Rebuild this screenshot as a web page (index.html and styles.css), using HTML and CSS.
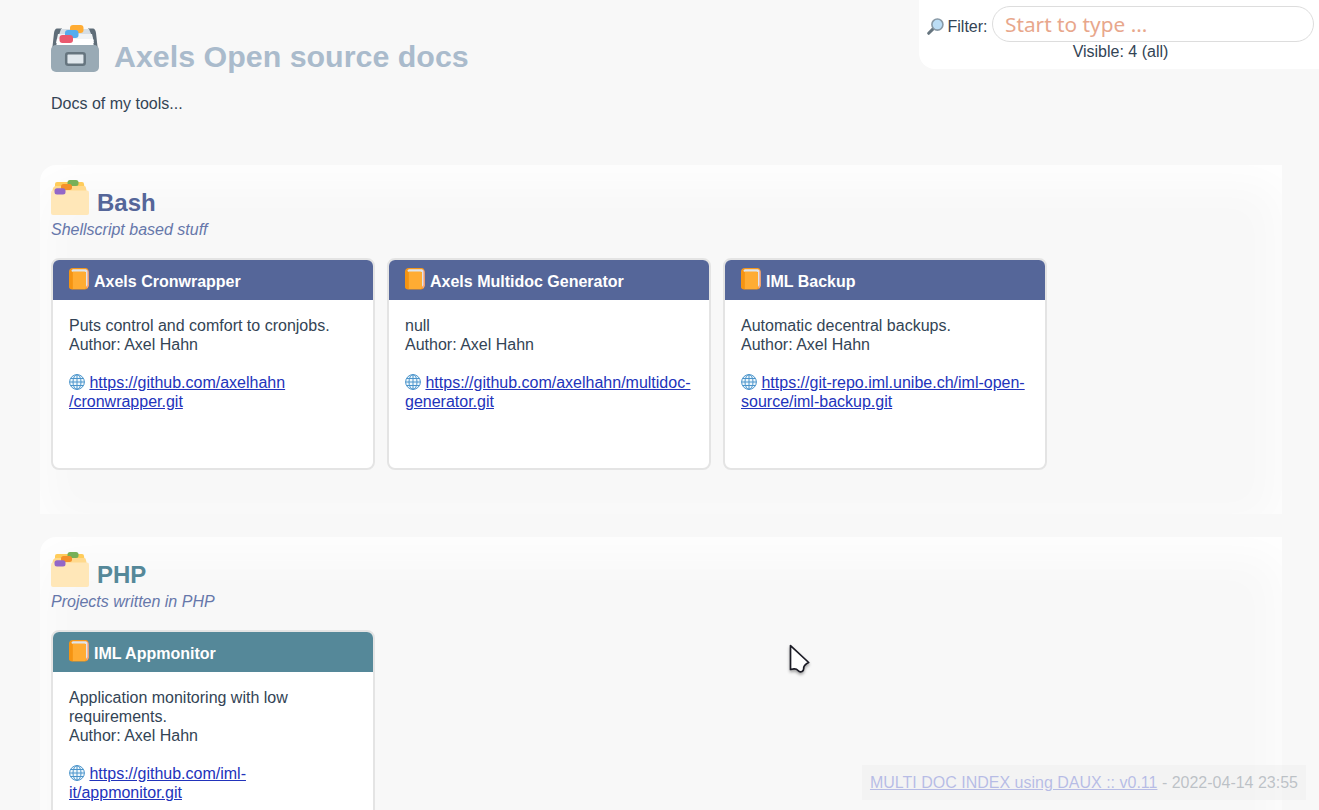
FILE: index.html
```
<!DOCTYPE html>
<html lang="en">
<head>
<meta charset="utf-8">
<title>Axels Open source docs</title>
<link rel="stylesheet" href="styles.css">
</head>
<body>
<svg class="defs" width="0" height="0">
  <symbol id="folder" viewBox="0 0 38 36">
    <path fill="#ffcc5a" d="M6 2h25q2 0 2 2l1 8H4V4q0-2 2-2z"/>
    <path fill="#ffd98c" d="M5 6h28q2 0 2 2l1 5H1l1-5q1-2 3-2z"/>
    <path fill="#ffe7b8" d="M2 10.500h34q2 0 2 2v20.500q0 2-2 2H2q-2 0-2-2V12.500q0-2 2-2z"/>
    <rect x="16.500" y="0" width="11" height="6" rx="2.500" fill="#77b058"/>
    <rect x="10" y="4" width="11" height="6" rx="2.500" fill="#f4902a"/>
    <rect x="3.500" y="8.300" width="11" height="6.200" rx="2.500" fill="#9367c8"/>
  </symbol>
  <symbol id="book" viewBox="0 0 20 22">
    <path fill="#f59618" d="M4 0h12.500q2.700 0 3 3l.5 14q-.5 4-4 4.500H3.500Q0 21.500 0 18V4q0-4 4-4z"/>
    <path fill="#f4a68b" d="M17.500 1.500q2 0 2.200 3v13q-.5 2.500-2.200 3z"/>
    <path fill="#dfe5ec" d="M4 1.300h13q1.300.3 1.300 2V17l-1.300 2V4H3q-1.500-1.500 1-2.700z"/>
    <path fill="#ffac33" d="M3.500 3.500h12q1.500 0 1.500 1.500v14q0 2-1.500 2h-12z"/>
    <path fill="#f59412" d="M.5 3q1.500 0 3.200 1v17.300Q0 21.300 0 18V4z"/>
  </symbol>
  <symbol id="globe" viewBox="0 0 16 16">
    <circle cx="8" cy="8" r="7.500" fill="#edf7fc"/>
    <g fill="none" stroke="#4b94cb" stroke-width="1">
      <circle cx="8" cy="8" r="7.400"/>
      <ellipse cx="8" cy="8" rx="4" ry="7.300"/>
      <path d="M8 .7v14.600M.7 8h14.600M2 4.500h12M2 11.500h12"/>
    </g>
  </symbol>
</svg>

<div class="filter">
  <label class="filter-row">
    <svg class="lens" viewBox="0 0 16 16"><path d="M1.600 14.400L5.500 10.500" stroke="#66757f" stroke-width="2.800" stroke-linecap="round"/><circle cx="9.800" cy="6.200" r="5.200" fill="#bbddf5" stroke="#8899a6" stroke-width="1.500"/></svg>
    <span>Filter:</span>
    <input type="text" placeholder="Start to type ...">
  </label>
  <div class="visible">Visible: 4 (all)</div>
</div>

<header class="page-head">
  <h1>
    <svg class="cabinet" viewBox="0 0 48 48">
      <path fill="#5f6d78" d="M6 4.500h5L6 27H1L3 9q.7-4.500 3-4.500zM37 4.500h5q2.300 0 3 4.500l2 18h-5z"/>
      <path fill="#d5dee5" d="M10 5h28l5 12H6z"/>
      <path fill="#f0f3f5" d="M7 10h34l2 9H5z"/>
      <path fill="#fff" d="M6 15h36l1 10H5z"/>
      <rect y="21" width="48" height="27" rx="5" fill="#99aab5"/>
      <rect x="15.200" y="29.200" width="18.500" height="11.500" rx="2" fill="#e1e8ed" stroke="#66757f" stroke-width="2.500"/>
      <rect x="19" y="1" width="13.500" height="8" rx="3" fill="#ffac33"/>
      <rect x="14" y="6" width="13.500" height="8" rx="3" fill="#55acee"/>
      <rect x="8.500" y="11" width="13.500" height="8" rx="3" fill="#ea596e"/>
    </svg>
    <span>Axels Open source docs</span>
  </h1>
  <p>Docs of my tools...</p>
</header>

<main>
  <section class="group bash">
    <h2><svg class="folder"><use href="#folder"/></svg><span>Bash</span></h2>
    <p class="hint">Shellscript based stuff</p>
    <div class="cards">
      <article class="card">
        <h3><svg class="book"><use href="#book"/></svg><span>Axels Cronwrapper</span></h3>
        <div class="card-body">Puts control and comfort to cronjobs.<br>Author: Axel Hahn<br><br>
          <svg class="globe"><use href="#globe"/></svg> <a href="#">https://github.com/axelhahn<br>/cronwrapper.git</a></div>
      </article>
      <article class="card">
        <h3><svg class="book"><use href="#book"/></svg><span>Axels Multidoc Generator</span></h3>
        <div class="card-body">null<br>Author: Axel Hahn<br><br>
          <svg class="globe"><use href="#globe"/></svg> <a href="#">https://github.com/axelhahn/multidoc-<br>generator.git</a></div>
      </article>
      <article class="card">
        <h3><svg class="book"><use href="#book"/></svg><span>IML Backup</span></h3>
        <div class="card-body">Automatic decentral backups.<br>Author: Axel Hahn<br><br>
          <svg class="globe"><use href="#globe"/></svg> <a href="#">https://git-repo.iml.unibe.ch/iml-open-<br>source/iml-backup.git</a></div>
      </article>
    </div>
  </section>

  <section class="group php">
    <h2><svg class="folder"><use href="#folder"/></svg><span>PHP</span></h2>
    <p class="hint">Projects written in PHP</p>
    <div class="cards">
      <article class="card">
        <h3><svg class="book"><use href="#book"/></svg><span>IML Appmonitor</span></h3>
        <div class="card-body">Application monitoring with low requirements.<br>Author: Axel Hahn<br><br>
          <svg class="globe"><use href="#globe"/></svg> <a href="#">https://github.com/iml-<br>it/appmonitor.git</a></div>
      </article>
    </div>
  </section>
</main>

<footer><a href="#">MULTI DOC INDEX using DAUX :: v0.11</a> - 2022-04-14 23:55</footer>

<svg class="pointer" viewBox="0 0 24 32"><path d="M2.500 1.700V25.500l3.500-.6q2.500-.2 4 1.600 1.800 2.200 4 1.100 2-1 1.700-4 .3-2.800 5-5.100z" fill="#fff" stroke="#1c1c26" stroke-width="1.700" stroke-linejoin="round"/></svg>
</body>
</html>
```
FILE: styles.css
```
* { box-sizing: border-box; }
html { height: 100%; overflow: hidden; }
body {
  margin: 0;
  height: 100%;
  overflow: hidden;
  background: #f8f8f8;
  color: #345;
  font: 16px/19px "Liberation Sans", Arial, sans-serif;
}
h1, h2, h3, p { margin: 0; }
svg { flex: none; }
.defs { position: absolute; }
a { color: #23b; }

.filter {
  position: fixed;
  top: 0;
  right: 0;
  width: 400px;
  height: 69px;
  padding: 6px 5px 0 8px;
  background: #fff;
  border-radius: 0 0 0 16px;
}
.filter-row { display: flex; align-items: center; }
.filter-row span { margin: 4px 4.500px 0 3.500px; }
.lens { width: 17px; height: 17px; margin-top: 4px; }
.filter input {
  flex: 1;
  min-width: 0;
  height: 36px;
  padding: 0 12px;
  border: 1px solid #ddd;
  border-radius: 18px;
  background: #fff;
  font: 20.8px "Noto Sans", sans-serif;
}
.filter input::placeholder { color: #e8a78c; opacity: 1; }
.visible { text-align: center; }

.page-head { height: 165px; padding: 24px 51px 0; }
h1 {
  display: flex;
  gap: 15px;
  height: 70px;
  color: #abc;
  font-size: 30.400px;
  line-height: 34px;
}
h1 span { margin-top: 15px; }
.cabinet { width: 48px; height: 48px; }

.group {
  width: 1242px;
  height: 349px;
  margin: 0 0 23px 40px;
  padding: 15px 11px 0;
  border-radius: 16px 0 0 0;
  box-shadow: inset 0 16px 48px #fff;
}
h2 {
  display: flex;
  gap: 8px;
  height: 40px;
  font-size: 24px;
  line-height: 28px;
}
h2 span { margin-top: 9px; }
.folder { width: 38px; height: 36px; }
.hint { height: 38px; color: #67a; font-style: italic; }
.bash h2 { color: #569; }
.php h2 { color: #589; }

.cards { display: flex; gap: 12px; }
.card {
  width: 324px;
  height: 212px;
  border: 2px solid #e4e4e4;
  border-radius: 8px;
  background: #fff;
  overflow: hidden;
}
h3 {
  display: flex;
  gap: 5px;
  height: 40px;
  padding: 8px 16px 0;
  color: #fff;
  font-size: 16px;
  line-height: 19px;
}
h3 span { margin-top: 4px; }
.bash h3 { background: #569; }
.php h3 { background: #589; }
.book { width: 20px; height: 22px; }
.card-body { padding: 16px; }
.globe { width: 16px; height: 16px; vertical-align: -2px; }

footer {
  position: fixed;
  right: 13px;
  bottom: 10px;
  height: 35px;
  padding: 8px;
  background: #e8e8e8;
  opacity: .3;
}
.pointer {
  position: fixed;
  left: 788px;
  top: 644px;
  width: 24px;
  height: 32px;
  filter: drop-shadow(0 2px 1.500px rgba(0, 0, 0, .35));
}
```
